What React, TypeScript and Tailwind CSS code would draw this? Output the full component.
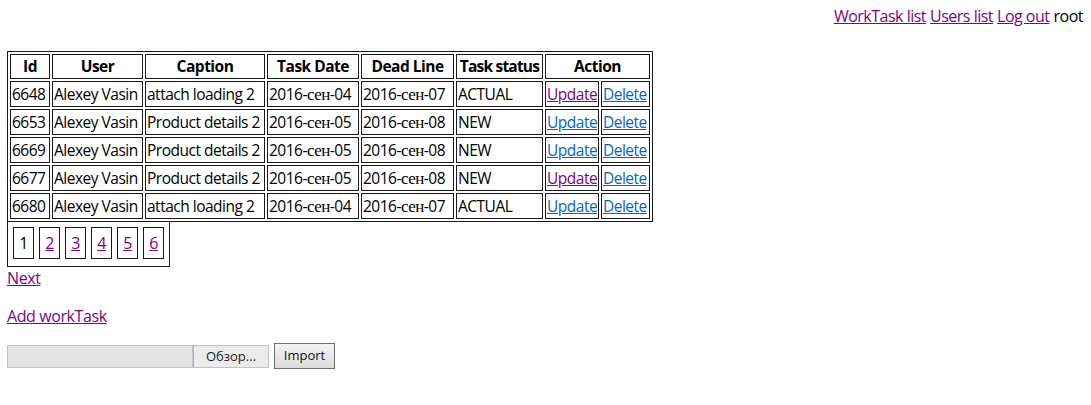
import React from 'react';

interface WorkTask {
  id: number;
  user: string;
  caption: string;
  taskDate: string;
  deadLine: string;
  status: string;
  updateVisited?: boolean;
}

const tasks: WorkTask[] = [
  { id: 6648, user: 'Alexey Vasin', caption: 'attach loading 2', taskDate: '04', deadLine: '07', status: 'ACTUAL', updateVisited: true },
  { id: 6653, user: 'Alexey Vasin', caption: 'Product details 2', taskDate: '05', deadLine: '08', status: 'NEW' },
  { id: 6669, user: 'Alexey Vasin', caption: 'Product details 2', taskDate: '05', deadLine: '08', status: 'NEW' },
  { id: 6677, user: 'Alexey Vasin', caption: 'Product details 2', taskDate: '05', deadLine: '08', status: 'NEW', updateVisited: true },
  { id: 6680, user: 'Alexey Vasin', caption: 'attach loading 2', taskDate: '04', deadLine: '07', status: 'ACTUAL' }
];

const visited = 'text-[#800080] underline';
const fresh = 'text-[#0066cc] underline';
const cell = 'border border-[#1a1a1a] px-px whitespace-nowrap overflow-hidden';

const SepDate: React.FC<{ day: string }> = ({ day }) => (
  <>
    2016-<span className="font-['Liberation_Serif',serif] text-[17px]">сен</span>-{day}
  </>
);

export default function App() {
  return (
    <div className="min-h-[405px] bg-white text-black text-[16px] font-['Open_Sans',sans-serif] tracking-[-0.4px]">
      <div className="flex justify-end gap-[4px] pt-[5px] pr-[8px] leading-[22px] tracking-[-0.5px]">
        <a href="#" className={visited}>WorkTask list</a>
        <a href="#" className={visited}>Users list</a>
        <a href="#" className={visited}>Log out</a>
        <span>root</span>
      </div>

      <div className="pl-[7px] pt-[24px]">
        <table className="table-fixed w-[646px] border-separate border-spacing-[2px] border border-[#1a1a1a] text-[15.5px] tracking-[-0.5px]">
          <colgroup>
            <col className="w-[40px]" />
            <col className="w-[91px]" />
            <col className="w-[120px]" />
            <col className="w-[92px]" />
            <col className="w-[93px]" />
            <col className="w-[87px]" />
            <col className="w-[54px]" />
            <col className="w-[49px]" />
          </colgroup>
          <thead>
            <tr className="h-[25px] leading-[21px]">
              <th className={cell}>Id</th>
              <th className={cell}>User</th>
              <th className={cell}>Caption</th>
              <th className={cell}>Task Date</th>
              <th className={cell}>Dead Line</th>
              <th className={`${cell} tracking-[-0.8px]`}>Task status</th>
              <th className={cell} colSpan={2}>Action</th>
            </tr>
          </thead>
          <tbody>
            {tasks.map((t) => (
              <tr key={t.id} className="h-[26px] leading-[22px]">
                <td className={cell}>{t.id}</td>
                <td className={cell}>{t.user}</td>
                <td className={cell}>{t.caption}</td>
                <td className={cell}><SepDate day={t.taskDate} /></td>
                <td className={cell}><SepDate day={t.deadLine} /></td>
                <td className={cell}>{t.status}</td>
                <td className={cell}>
                  <a href="#" className={t.updateVisited ? visited : fresh}>Update</a>
                </td>
                <td className={cell}>
                  <a href="#" className={fresh}>Delete</a>
                </td>
              </tr>
            ))}
          </tbody>
        </table>

        <div className="-mt-px inline-flex gap-[5px] border border-[#1a1a1a] px-[5px] pt-[5px] pb-[7px]">
          {[1, 2, 3, 4, 5, 6].map((n) => (
            <div key={n} className="flex h-[32px] w-[21px] items-center justify-center border border-[#1a1a1a]">
              {n === 1 ? <span>1</span> : <a href="#" className={visited}>{n}</a>}
            </div>
          ))}
        </div>

        <div className="leading-[22px]">
          <a href="#" className={visited}>Next</a>
        </div>

        <p className="mt-[16px] leading-[22px]">
          <a href="#" className={visited}>Add workTask</a>
        </p>

        <form className="mt-[16px] flex items-center gap-[5px] text-[13px] tracking-normal">
          <div className="flex h-[23px]">
            <div className="w-[186px] border border-[#c2c2c2] bg-[#e4e4e4]" />
            <button type="button" className="w-[76px] border border-[#c2c2c2] border-l-[#b5b5b5] bg-[#ebebeb] text-[#222] leading-[21px]">
              Обзор...
            </button>
          </div>
          <button type="button" className="h-[26px] w-[61px] border border-[#707070] bg-gradient-to-b from-[#f2f2f2] to-[#dddddd] text-[#111]">
            Import
          </button>
        </form>
      </div>
    </div>
  );
}
